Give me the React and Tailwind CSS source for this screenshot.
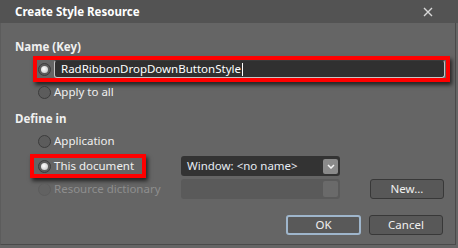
const Radio = ({ checked, disabled }) => (
  <span
    className={`relative inline-block w-[13px] h-[13px] rounded-full border shrink-0 ${
      disabled ? "border-[#5c5c5c] bg-[#626262]" : "border-[#3c3c3c] bg-[#5c5c5c]"
    }`}
  >
    {checked && (
      <span className="absolute left-[2px] top-[2px] w-[7px] h-[7px] rounded-full bg-[radial-gradient(circle_at_40%_40%,#ffffff,#bdbdbd)]" />
    )}
  </span>
);

const App = () => {
  return (
    <div
      className="w-[458px] h-[248px] bg-[#656565] text-[11.5px] text-[#f0f0f0] overflow-hidden"
      style={{ fontFamily: '"Noto Sans", "Open Sans", sans-serif' }}
    >
      {/* Title bar */}
      <div className="h-[23px] bg-[#535353] flex items-center justify-between pl-[15px] pr-[25px]">
        <span className="font-bold text-[11.5px] text-white leading-none">Create Style Resource</span>
        <svg width="10" height="10" viewBox="0 0 10 10">
          <path d="M1 1L9 9M9 1L1 9" stroke="#d8d8d8" strokeWidth="1.4" />
        </svg>
      </div>

      <div className="h-[222px] w-[456px] border-r border-b border-l border-[#4a4a4a] border-l-[#5c5c5c] pl-[14px] pr-[11px]">
        {/* Name (Key) */}
        <div className="h-[33px] pt-[16px] font-bold leading-[16px]">Name (Key)</div>

        <div className="ml-[18px] w-[417px] h-[26px] border-[4px] border-[#ff0000] shadow-[2px_3px_4px_rgba(0,0,0,0.65)] flex items-center pl-[1px]">
          <Radio checked />
          <div className="ml-[3px] flex-1 h-[18px] mr-[1px] bg-[#303030] border border-[#c4c4c4] border-t-[#3a3a3a] rounded-[3px] flex items-center pl-[6px] text-white leading-none">
            RadRibbonDropDownButtonStyle
            <span className="w-px h-[13px] bg-white ml-px" />
          </div>
        </div>

        <div className="h-[20px] ml-[23px] flex items-center gap-[3px]">
          <Radio />
          <span>Apply to all</span>
        </div>

        <div className="h-[17px] mt-[8px] font-bold flex items-center">Define in</div>

        <div className="h-[20px] ml-[23px] mt-[4px] flex items-center gap-[3px]">
          <Radio />
          <span>Application</span>
        </div>

        {/* This document + window combo */}
        <div className="flex items-center mt-[3px] h-[24px]">
          <div className="ml-[15px] w-[116px] h-[24px] border-[4px] border-[#ff0000] shadow-[2px_3px_4px_rgba(0,0,0,0.65)] flex items-center pl-[4px] gap-[3px]">
            <Radio checked />
            <span>This document</span>
          </div>
          <div className="ml-[35px] w-[159px] h-[20px] bg-[#333333] rounded-[3px] flex items-center justify-between pl-[6px] pr-[2px] text-[#e6ecf4]">
            <span>Window: &lt;no name&gt;</span>
            <span className="w-[15px] h-[15px] bg-[#8a8a8a] rounded-[2px] flex items-center justify-center">
              <svg width="8" height="5" viewBox="0 0 8 5">
                <path d="M1 1L4 4L7 1" stroke="#f4f4f4" strokeWidth="1.5" fill="none" />
              </svg>
            </span>
          </div>
        </div>

        {/* Resource dictionary */}
        <div className="flex items-center mt-[1px] h-[20px]">
          <div className="ml-[23px] w-[143px] flex items-center gap-[3px] text-[#8e8e8e]">
            <Radio disabled />
            <span>Resource dictionary</span>
          </div>
          <div className="w-[159px] h-[20px] bg-[#5a5a5a] rounded-[3px] flex items-center justify-end pr-[2px]">
            <span className="w-[15px] h-[16px] bg-[#6a6a6a] rounded-[2px]" />
          </div>
          <button className="ml-[30px] w-[74px] h-[20px] bg-[#585858] border border-[#383838] rounded-[3px] text-[#f0f0f0] leading-none">
            New...
          </button>
        </div>

        {/* OK / Cancel */}
        <div className="flex justify-end gap-[8px] mt-[16px] pr-px">
          <button className="w-[75px] h-[20px] bg-[#595959] border-2 border-[#9fb6cc] rounded-[3px] leading-none">
            OK
          </button>
          <button className="w-[74px] h-[20px] bg-[#585858] border border-[#383838] rounded-[3px] leading-none">
            Cancel
          </button>
        </div>
      </div>
    </div>
  );
};

export default App;
